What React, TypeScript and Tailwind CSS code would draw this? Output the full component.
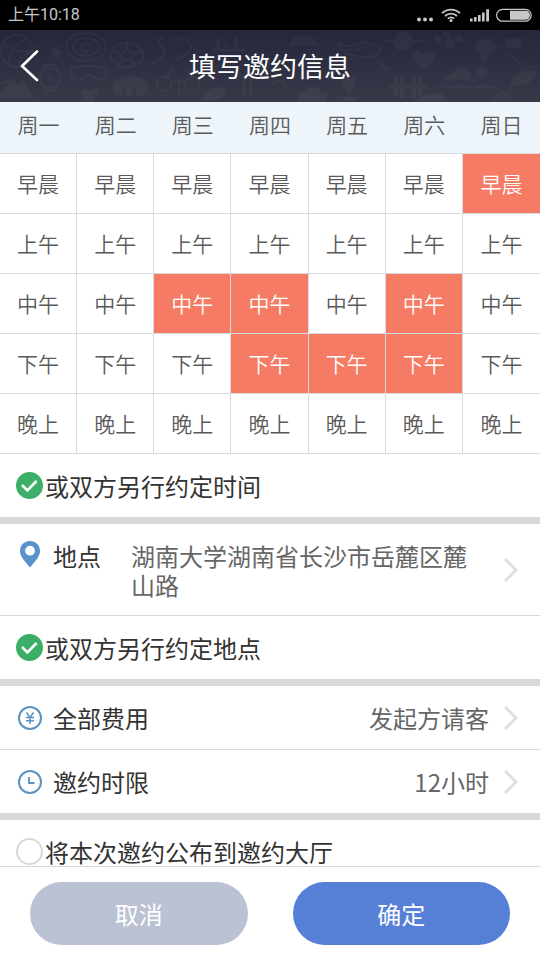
import { useState, type ReactNode } from 'react';

const days = ['周一', '周二', '周三', '周四', '周五', '周六', '周日'];
const periods = ['早晨', '上午', '中午', '下午', '晚上'];

function StatusBar() {
    return (
        <div className="flex h-[30px] shrink-0 items-center justify-between bg-black px-2 text-[#c8c8c8]">
            <span className="font-['Roboto','Noto_Sans_CJK_SC',sans-serif] text-base">上午10:18</span>
            <svg width="116" height="14" viewBox="0 0 116 14" fill="currentColor" aria-hidden="true">
                <circle cx="3" cy="11.500" r="2" />
                <circle cx="9" cy="11.500" r="2" />
                <circle cx="15" cy="11.500" r="2" />
                <g fill="none" stroke="currentColor" strokeWidth="1.7">
                    <path d="M26 5.2a13 13 0 0 1 18 0" />
                    <path d="M29 8a9 9 0 0 1 12 0" />
                    <path d="M31.8 10.6a5 5 0 0 1 6.4 0" />
                </g>
                <circle cx="35" cy="12.4" r="1.5" />
                <path d="M54 10.500h2.600v3H54zM58 9h2.600v4.500H58zM62 7h2.600v6.500H62zM66 4.500h2.600v9H66zM70.2 1.200h2.8v12.300h-2.8z" />
                <rect x="80.6" y="1.4" width="34.6" height="11.8" rx="5.9" fill="none" stroke="currentColor" strokeWidth="1.2" />
                <path d="M94 2.800h15.500a4.500 4.500 0 0 1 0 9H94z" />
            </svg>
        </div>
    );
}

function SportsPattern() {
    return (
        <svg className="absolute inset-0 h-full w-full opacity-[0.03]" viewBox="0 0 540 72" preserveAspectRatio="xMidYMid slice" fill="none" stroke="#fff" strokeWidth="2" aria-hidden="true">
            <circle cx="17" cy="21" r="16" />
            <path d="M3 13c10 8 20 10 30 8M8 34c2-12 10-22 20-26M20 37c-2-8 4-14 12-14" />
            <path d="m57 15 2 5 5 1-4 4 1 5-5-3-5 2 2-5-3-4 5-1z" fill="#fff" stroke="none" />
            <ellipse cx="86" cy="17" rx="20" ry="14" />
            <ellipse cx="86" cy="17" rx="13" ry="9" />
            <ellipse cx="86" cy="17" rx="5" ry="4" />
            <ellipse cx="127" cy="25" rx="16" ry="12" />
            <path d="m127 20 6 4-2 6h-8l-2-6zM127 13v7M133 24l9-3M131 30l6 6M123 30l-6 6M121 24l-9-3" />
            <path d="M151 34c12-6 18-12 10-18-4-4-2-8 4-9M173 10c10-6 22 4 16 12-4 6-10 3-12 8" />
            <circle cx="50" cy="48" r="10" />
            <path d="M50 42v6h5M43 40l2-5h10l2 5M43 56l2 5h10l2-5" />
            <path d="M72 38c10-3 24-3 34 0 2 6 0 12-6 12-5 0-7-5-11-5s-6 5-11 5c-6 0-8-6-6-12z" />
            <path d="M113 60c-2-9 6-14 16-14s20 4 19 11c0 5-5 9-10 9l-6-12 1 12h-6l-3-12-2 12c-4 0-8-2-9-6z" fill="#fff" stroke="none" />
            <circle cx="164" cy="54" r="7" />
            <circle cx="192" cy="54" r="7" />
            <path d="M171 53c4-4 10-4 14 0M165 47l8-8M192 47l-6-8M179 50v14" />
            <path d="m0 64 12-16 6 6 5-4 10 17H0z" fill="#fff" stroke="none" />
            <path d="m80 60 6-2c2 3 6 3 8 0l6 2-3 6-3-1v7H84v-7l-2 1z" fill="#fff" stroke="none" />
            <path d="M202 70c2-10 12-14 24-12-1 10-10 16-24 12z" fill="#fff" stroke="none" />
            <path d="M244 46v20M251 46v20M218 8v12M226 12v8M236 5v15M212 20h34" strokeWidth="3" />
            <path d="M289 14c2-10 22-12 26-2l4 5c-10-3-20-3-30 0z" fill="#fff" stroke="none" />
            <path d="M338 14c10 4 18 2 24-2l18 5c2 8-8 12-18 10s-20-2-24-13zM345 20c8 2 14 0 20-4" />
            <circle cx="403" cy="11" r="9" fill="#fff" />
            <path d="M384 11h38" />
            <g fill="#fff" stroke="none">
                <circle cx="438" cy="9" r="4" />
                <circle cx="447" cy="5" r="4" />
                <circle cx="450" cy="14" r="5" />
                <circle cx="459" cy="9" r="4" />
                <ellipse cx="486" cy="17" rx="11" ry="8" />
                <path d="m482 22 6 2-2 8h-5zM423 39c-20-14-10-22-2-16l2 2 2-2c8-6 20 2-2 16zM374 29l16 10-4 4zM506 8h16v10h-16z" />
                <path d="m443 50 16-13 14 6-4 4 8 6c-10-4-20-4-34-3z" />
                <circle cx="482" cy="42" r="6" />
                <path d="M394 48h4v18h-4zM400 46h4v22h-4zM412 46h4v22h-4zM418 48h4v18h-4zM390 55h36v4h-36z" />
                <path d="M342 48h14c0 8-3 12-6 13v6h5v4h-12v-4h5v-6c-3-1-6-5-6-13zM299 62h6l3-5h10l3 5h6v10h-28zM424 64h20v8h-30z" />
                <path d="M511 54c2-12 14-16 26-12-2 10-14 16-26 12z" />
            </g>
            <path d="M438 57c8-4 12 3 20 0s12 3 20 0 10 2 16 0M492 72l10-10 4 4 6-10M508 24l14 10M0 54c4-4 10-2 12 2M272 54c6-6 12-2 14 4" />
        </svg>
    );
}

function Chevron() {
    return (
        <svg className="shrink-0" width="14" height="24" viewBox="0 0 14 24" fill="none" stroke="#dcdcdc" strokeWidth="2.8" aria-hidden="true">
            <path d="M1 1l11 11L1 23" />
        </svg>
    );
}

function CheckRow({ label, initial = false }: { label: string; initial?: boolean }) {
    const [checked, setChecked] = useState(initial);

    return (
        <label className="flex h-[63px] items-center gap-0.5 bg-white pl-4 text-2xl leading-7">
            <span className="grid size-[27px] shrink-0">
                <input type="checkbox" checked={checked} onChange={(e) => setChecked(e.target.checked)} className="peer col-start-1 row-start-1 size-full appearance-none rounded-full border-2 border-[#d8d8d8] bg-white checked:border-[#3bae68] checked:bg-[#3bae68]" />
                <svg className="pointer-events-none invisible col-start-1 row-start-1 peer-checked:visible" viewBox="0 0 27 27" fill="none" stroke="#fff" strokeWidth="2.6" aria-hidden="true">
                    <path d="M6 13l5.4 5.4L20.6 9" />
                </svg>
            </span>
            {label}
        </label>
    );
}

function DetailRow({ icon, label, value }: { icon: ReactNode; label: string; value: string }) {
    return (
        <li>
            <button type="button" className="flex h-[63px] w-full items-center bg-white pl-[18px] pr-[22px] text-left text-2xl leading-7">
                {icon}
                <span className="ml-[11px]">{label}</span>
                <span className="mr-[15px] flex-1 text-right text-[#666]">{value}</span>
                <Chevron />
            </button>
        </li>
    );
}

export default function App() {
    // "day-period" keys of the chosen slots
    const [selected, setSelected] = useState(['6-0', '2-2', '3-2', '5-2', '3-3', '4-3', '5-3']);

    const toggle = (key: string) => {
        setSelected(selected.includes(key) ? selected.filter((k) => k !== key) : [...selected, key]);
    };

    return (
        <div className="flex h-screen flex-col bg-white font-['Noto_Sans_CJK_SC',sans-serif] text-[#333]">
            <StatusBar />

            <header className="relative flex h-[72px] shrink-0 items-center bg-linear-to-b from-[#25263a] to-[#383a49] px-5 text-white">
                <SportsPattern />
                <button type="button" aria-label="返回" className="relative">
                    <svg width="20" height="32" viewBox="0 0 20 32" fill="none" stroke="currentColor" strokeWidth="2.6" strokeLinecap="round" strokeLinejoin="round" aria-hidden="true">
                        <path d="M17 1.500L2 16L17 30" />
                    </svg>
                </button>
                <h1 className="relative flex-1 pr-5 text-center text-[27px] leading-9">填写邀约信息</h1>
            </header>

            <main className="flex-1 overflow-y-auto [scrollbar-width:none]">
                <table className="w-full table-fixed border-separate border-spacing-0 text-center text-[21px] font-[350] text-[#5a5a5a]">
                    <thead>
                        <tr>
                            {days.map((day) => (
                                <th key={day} scope="col" className="h-[52px] border-b border-[#d5dadd] bg-[#edf5fb] p-0 pb-2 font-[350] leading-7">{day}</th>
                            ))}
                        </tr>
                    </thead>
                    <tbody>
                        {periods.map((period, p) => (
                            <tr key={period}>
                                {days.map((day, d) => {
                                    const key = `${d}-${p}`;
                                    const on = selected.includes(key);
                                    return (
                                        <td key={key} className="h-[60px] border-b border-r border-[#d8dcdc] p-0 last:border-r-0">
                                            <button type="button" aria-label={day + period} aria-pressed={on} onClick={() => toggle(key)} className={`block h-[59px] w-full ${on ? 'bg-[#f67b65] text-white' : 'bg-white'}`}>{period}</button>
                                        </td>
                                    );
                                })}
                            </tr>
                        ))}
                    </tbody>
                </table>

                <CheckRow label="或双方另行约定时间" initial />

                <section className="border-t-[7px] border-[#d9d9d9]">
                    <button type="button" className="flex w-full items-start border-b border-[#d9d9d9] bg-white pb-4 pl-[18px] pr-[22px] pt-[17px] text-left text-2xl leading-[29px]">
                        <svg className="shrink-0" width="24" height="27" viewBox="0 0 24 27" aria-hidden="true">
                            <path fillRule="evenodd" fill="#5893cb" d="M12 0C6.300 0 2 4.400 2 9.800c0 6 4.800 10.400 10 16.700 5.200-6.300 10-10.700 10-16.700C22 4.400 17.700 0 12 0zm0 4.800a4.900 4.900 0 1 1 0 9.800 4.900 4.900 0 0 1 0-9.800z" />
                        </svg>
                        <span className="ml-[11px] shrink-0">地点</span>
                        <span className="ml-[30px] mr-[15px] flex-1 text-[#666]">湖南大学湖南省长沙市岳麓区麓山路</span>
                        <span className="flex self-center"><Chevron /></span>
                    </button>
                    <CheckRow label="或双方另行约定地点" initial />
                </section>

                <ul className="divide-y divide-[#d9d9d9] border-t-[7px] border-[#d9d9d9]">
                    <DetailRow
                        label="全部费用"
                        value="发起方请客"
                        icon={
                            <svg className="shrink-0" width="24" height="24" viewBox="0 0 24 24" fill="none" stroke="#5b92c0" aria-hidden="true">
                                <circle cx="12" cy="12" r="11" strokeWidth="2" />
                                <path d="M8.500 6.500L12 11.500l3.500-5M12 11.500V18M8 11.500h8M8 14.700h8" strokeWidth="1.500" />
                            </svg>
                        }
                    />
                    <DetailRow
                        label="邀约时限"
                        value="12小时"
                        icon={
                            <svg className="shrink-0" width="24" height="24" viewBox="0 0 24 24" fill="none" stroke="#5b92c0" aria-hidden="true">
                                <circle cx="12" cy="12" r="11" strokeWidth="2" />
                                <path d="M11 7v6h5.500" strokeWidth="1.800" />
                            </svg>
                        }
                    />
                </ul>

                <section className="border-t-[7px] border-[#d9d9d9]">
                    <CheckRow label="将本次邀约公布到邀约大厅" />
                </section>
            </main>

            <footer className="grid shrink-0 grid-cols-2 gap-[45px] border-t border-[#d9d9d9] bg-white px-[30px] py-[15px] text-2xl text-white">
                <button type="button" className="h-[63px] rounded-full bg-[#bbc2d3]">取消</button>
                <button type="button" className="h-[63px] rounded-full bg-[#5680d6]">确定</button>
            </footer>
        </div>
    );
}
